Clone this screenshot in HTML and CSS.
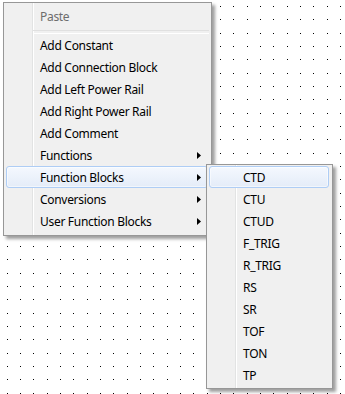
FILE: index.html
```html
<!DOCTYPE html>
<html lang="en">
  <head>
    <meta charset="UTF-8" />
    <title>Context Menu</title>
    <link rel="stylesheet" href="styles.css">
  </head>
  <body>
    <div class="canvas">
      <svg class="grid" width="345" height="394">
        <defs>
          <pattern id="dots" width="40" height="40" patternUnits="userSpaceOnUse">
            <rect x="7" y="6" width="1" height="1" />
            <rect x="20" y="6" width="1" height="1" />
            <rect x="33" y="6" width="1" height="1" />
            <rect x="7" y="19" width="1" height="1" />
            <rect x="20" y="19" width="1" height="1" />
            <rect x="33" y="19" width="1" height="1" />
            <rect x="7" y="33" width="1" height="1" />
            <rect x="20" y="33" width="1" height="1" />
            <rect x="33" y="33" width="1" height="1" />
          </pattern>
        </defs>
        <rect width="345" height="394" fill="url(#dots)" />
      </svg>

      <ul class="menu main-menu">
        <li class="item disabled">Paste</li>
        <li class="separator"></li>
        <li class="item">Add Constant</li>
        <li class="item">Add Connection Block</li>
        <li class="item">Add Left Power Rail</li>
        <li class="item">Add Right Power Rail</li>
        <li class="item">Add Comment</li>
        <li class="item has-sub">Functions</li>
        <li class="item has-sub active">Function Blocks</li>
        <li class="item has-sub">Conversions</li>
        <li class="item has-sub">User Function Blocks</li>
      </ul>

      <ul class="menu sub-menu">
        <li class="item active">CTD</li>
        <li class="item">CTU</li>
        <li class="item">CTUD</li>
        <li class="item">F_TRIG</li>
        <li class="item">R_TRIG</li>
        <li class="item">RS</li>
        <li class="item">SR</li>
        <li class="item">TOF</li>
        <li class="item">TON</li>
        <li class="item">TP</li>
      </ul>
    </div>
  </body>
</html>
```

FILE: styles.css
```css
* {
  margin: 0;
  padding: 0;
  box-sizing: border-box;
}

body {
  background-color: #fff;
  font-family: "Noto Sans", "Open Sans", sans-serif;
  font-size: 12px;
  letter-spacing: -0.3px;
  color: #000;
}

.canvas {
  position: relative;
  width: 345px;
  height: 394px;
  overflow: hidden;
}

.grid {
  display: block;
  fill: #000;
}

.menu {
  position: absolute;
  list-style: none;
  border: 1px solid #979797;
  background:
    linear-gradient(to right, transparent 28px, #e2e3e3 28px, #e2e3e3 29px, #fff 29px, #fff 30px, transparent 30px),
    #f0f0f0;
  box-shadow: 3px 3px 3px rgba(0, 0, 0, 0.38);
}

.main-menu {
  left: 3px;
  top: 2px;
  width: 209px;
  padding: 2px 0 3px;
}

.sub-menu {
  left: 206px;
  top: 164px;
  width: 127px;
  padding: 1px 0 2px;
}

.item {
  position: relative;
  display: flex;
  align-items: center;
  height: 22px;
  margin: 0 3px 0 2px;
  padding-left: 33px;
  border: 1px solid transparent;
  border-radius: 3px;
  white-space: nowrap;
}

.item.disabled {
  color: #6d6d6d;
}

.item.active {
  border-color: #aecdf5;
  background: linear-gradient(to bottom, #f4f8fe, #e4ecf8);
  box-shadow: inset 0 0 0 1px rgba(255, 255, 255, 0.5);
}

.has-sub::after {
  content: "";
  position: absolute;
  right: 6px;
  top: 7px;
  width: 4px;
  height: 7px;
  background-color: #000;
  clip-path: polygon(0 0, 100% 50%, 0 100%);
}

.separator {
  height: 7px;
  margin: 0 2px 0 29px;
  padding-top: 3px;
}

.separator::before {
  content: "";
  display: block;
  height: 2px;
  border-top: 1px solid #e0e0e0;
  border-bottom: 1px solid #fff;
}
```
